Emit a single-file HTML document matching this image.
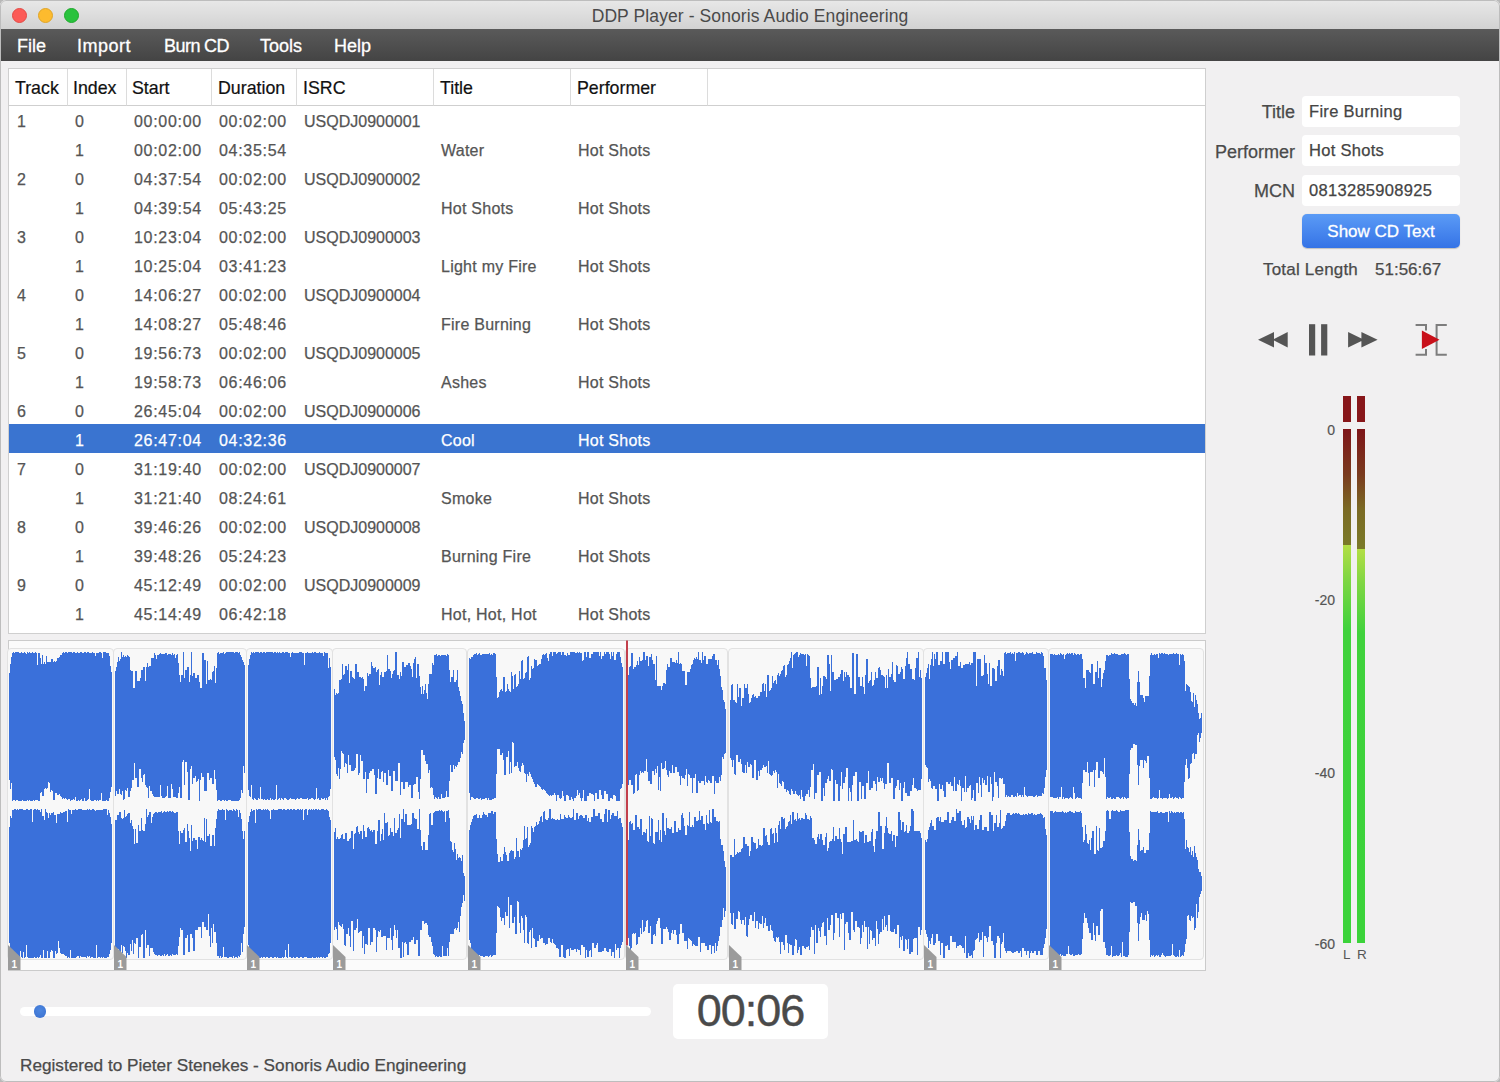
<!DOCTYPE html>
<html><head><meta charset="utf-8">
<style>
*{margin:0;padding:0;box-sizing:border-box}
html,body{width:1500px;height:1082px;overflow:hidden;background:#b8b8b8}
body{font-family:"Liberation Sans",sans-serif;position:relative}
.a{position:absolute}
#win{position:absolute;left:0;top:0;width:1500px;height:1082px;background:#f1f0f1;border-radius:6px;overflow:hidden}
#bd{position:absolute;left:0;top:0;width:1500px;height:1082px;border-radius:6px;border:1px solid #bdbdbd;pointer-events:none}
.ml{font-size:14px;color:#555;width:40px;text-align:right;-webkit-text-stroke:0.2px #555}
#tb{position:absolute;left:0;top:0;width:1500px;height:29px;background:linear-gradient(#e8e8e8,#d2d2d2);}
#tbt{position:absolute;left:0;top:6px;width:1500px;text-align:center;font-size:17.5px;color:#4a4a4a;letter-spacing:0.1px}
.light{position:absolute;top:7.5px;width:15px;height:15px;border-radius:50%}
#mb{position:absolute;left:0;top:29px;width:1500px;height:32px;background:linear-gradient(#5a5a5a,#444)}
.mi{position:absolute;top:36px;font-size:18px;color:#fff;-webkit-text-stroke:0.3px #fff}
#tbl{position:absolute;left:8px;top:68px;width:1198px;height:566px;background:#fff;border:1px solid #cfcfcf}
.hd{position:absolute;top:0;height:37px;border-bottom:1px solid #cfcfcf;border-right:1px solid #dcdcdc}
.ht{position:absolute;top:9px;font-size:17.8px;color:#111;-webkit-text-stroke:0.2px #111}
.row{position:absolute;left:0;width:1196px;height:29px}
.c{position:absolute;top:6px;font-size:16px;color:#555;white-space:nowrap;-webkit-text-stroke:0.25px #555}
.t{letter-spacing:0.7px}
.sel{}
.sel .c{color:#fff;-webkit-text-stroke:0.25px #fff}
.lbl{position:absolute;font-size:18px;color:#4a4a4a;text-align:right;width:200px;-webkit-text-stroke:0.25px #4a4a4a}
.fld{position:absolute;left:1302px;width:158px;height:31px;background:#fff;border-radius:4px}
.fv{position:absolute;left:7px;top:6px;font-size:16.5px;color:#444;letter-spacing:0.3px;white-space:nowrap;-webkit-text-stroke:0.25px #444}
</style></head><body>
<div id="win">
  <div id="tb"><div id="tbt">DDP Player - Sonoris Audio Engineering</div></div>
  <div class="light" style="left:11.5px;background:#fc5b57;border:1px solid #e34a45"></div>
  <div class="light" style="left:38px;background:#fdbb2e;border:1px solid #e0a527"></div>
  <div class="light" style="left:64px;background:#29c23d;border:1px solid #1eaa2c"></div>
  <div id="mb"></div>
  <div class="mi" style="left:17px">File</div>
  <div class="mi" style="left:77px;letter-spacing:0.5px">Import</div>
  <div class="mi" style="left:164px;letter-spacing:-0.5px;word-spacing:-0.5px">Burn CD</div>
  <div class="mi" style="left:260px">Tools</div>
  <div class="mi" style="left:334px">Help</div>

  <div id="tbl">
    <div class="hd" style="left:0px;width:59px;"></div>
<div class="hd" style="left:59px;width:59px;"></div>
<div class="hd" style="left:118px;width:85px;"></div>
<div class="hd" style="left:203px;width:85px;"></div>
<div class="hd" style="left:288px;width:137px;"></div>
<div class="hd" style="left:425px;width:137px;"></div>
<div class="hd" style="left:562px;width:137px;"></div>
<div class="hd" style="left:699px;width:498px;border-right:none"></div>
<div class="ht" style="left:6px">Track</div>
<div class="ht" style="left:64px">Index</div>
<div class="ht" style="left:123px">Start</div>
<div class="ht" style="left:209px">Duration</div>
<div class="ht" style="left:294px">ISRC</div>
<div class="ht" style="left:431px">Title</div>
<div class="ht" style="left:568px">Performer</div>
    <div class="a" style="left:0;top:355px;width:1196px;height:29px;background:#3a74d0"></div>
<div class="row" style="top:38px"><div class="c" style="left:8px">1</div><div class="c" style="left:66px">0</div><div class="c t" style="left:125px">00:00:00</div><div class="c t" style="left:210px">00:02:00</div><div class="c" style="left:295px">USQDJ0900001</div></div>
<div class="row" style="top:67px"><div class="c" style="left:66px">1</div><div class="c t" style="left:125px">00:02:00</div><div class="c t" style="left:210px">04:35:54</div><div class="c" style="left:432px;letter-spacing:0.25px">Water</div><div class="c" style="left:569px;letter-spacing:0.25px">Hot Shots</div></div>
<div class="row" style="top:96px"><div class="c" style="left:8px">2</div><div class="c" style="left:66px">0</div><div class="c t" style="left:125px">04:37:54</div><div class="c t" style="left:210px">00:02:00</div><div class="c" style="left:295px">USQDJ0900002</div></div>
<div class="row" style="top:125px"><div class="c" style="left:66px">1</div><div class="c t" style="left:125px">04:39:54</div><div class="c t" style="left:210px">05:43:25</div><div class="c" style="left:432px;letter-spacing:0.25px">Hot Shots</div><div class="c" style="left:569px;letter-spacing:0.25px">Hot Shots</div></div>
<div class="row" style="top:154px"><div class="c" style="left:8px">3</div><div class="c" style="left:66px">0</div><div class="c t" style="left:125px">10:23:04</div><div class="c t" style="left:210px">00:02:00</div><div class="c" style="left:295px">USQDJ0900003</div></div>
<div class="row" style="top:183px"><div class="c" style="left:66px">1</div><div class="c t" style="left:125px">10:25:04</div><div class="c t" style="left:210px">03:41:23</div><div class="c" style="left:432px;letter-spacing:0.25px">Light my Fire</div><div class="c" style="left:569px;letter-spacing:0.25px">Hot Shots</div></div>
<div class="row" style="top:212px"><div class="c" style="left:8px">4</div><div class="c" style="left:66px">0</div><div class="c t" style="left:125px">14:06:27</div><div class="c t" style="left:210px">00:02:00</div><div class="c" style="left:295px">USQDJ0900004</div></div>
<div class="row" style="top:241px"><div class="c" style="left:66px">1</div><div class="c t" style="left:125px">14:08:27</div><div class="c t" style="left:210px">05:48:46</div><div class="c" style="left:432px;letter-spacing:0.25px">Fire Burning</div><div class="c" style="left:569px;letter-spacing:0.25px">Hot Shots</div></div>
<div class="row" style="top:270px"><div class="c" style="left:8px">5</div><div class="c" style="left:66px">0</div><div class="c t" style="left:125px">19:56:73</div><div class="c t" style="left:210px">00:02:00</div><div class="c" style="left:295px">USQDJ0900005</div></div>
<div class="row" style="top:299px"><div class="c" style="left:66px">1</div><div class="c t" style="left:125px">19:58:73</div><div class="c t" style="left:210px">06:46:06</div><div class="c" style="left:432px;letter-spacing:0.25px">Ashes</div><div class="c" style="left:569px;letter-spacing:0.25px">Hot Shots</div></div>
<div class="row" style="top:328px"><div class="c" style="left:8px">6</div><div class="c" style="left:66px">0</div><div class="c t" style="left:125px">26:45:04</div><div class="c t" style="left:210px">00:02:00</div><div class="c" style="left:295px">USQDJ0900006</div></div>
<div class="row sel" style="top:357px"><div class="c" style="left:66px">1</div><div class="c t" style="left:125px">26:47:04</div><div class="c t" style="left:210px">04:32:36</div><div class="c" style="left:432px;letter-spacing:0.25px">Cool</div><div class="c" style="left:569px;letter-spacing:0.25px">Hot Shots</div></div>
<div class="row" style="top:386px"><div class="c" style="left:8px">7</div><div class="c" style="left:66px">0</div><div class="c t" style="left:125px">31:19:40</div><div class="c t" style="left:210px">00:02:00</div><div class="c" style="left:295px">USQDJ0900007</div></div>
<div class="row" style="top:415px"><div class="c" style="left:66px">1</div><div class="c t" style="left:125px">31:21:40</div><div class="c t" style="left:210px">08:24:61</div><div class="c" style="left:432px;letter-spacing:0.25px">Smoke</div><div class="c" style="left:569px;letter-spacing:0.25px">Hot Shots</div></div>
<div class="row" style="top:444px"><div class="c" style="left:8px">8</div><div class="c" style="left:66px">0</div><div class="c t" style="left:125px">39:46:26</div><div class="c t" style="left:210px">00:02:00</div><div class="c" style="left:295px">USQDJ0900008</div></div>
<div class="row" style="top:473px"><div class="c" style="left:66px">1</div><div class="c t" style="left:125px">39:48:26</div><div class="c t" style="left:210px">05:24:23</div><div class="c" style="left:432px;letter-spacing:0.25px">Burning Fire</div><div class="c" style="left:569px;letter-spacing:0.25px">Hot Shots</div></div>
<div class="row" style="top:502px"><div class="c" style="left:8px">9</div><div class="c" style="left:66px">0</div><div class="c t" style="left:125px">45:12:49</div><div class="c t" style="left:210px">00:02:00</div><div class="c" style="left:295px">USQDJ0900009</div></div>
<div class="row" style="top:531px"><div class="c" style="left:66px">1</div><div class="c t" style="left:125px">45:14:49</div><div class="c t" style="left:210px">06:42:18</div><div class="c" style="left:432px;letter-spacing:0.25px">Hot, Hot, Hot</div><div class="c" style="left:569px;letter-spacing:0.25px">Hot Shots</div></div>
  </div>

  <div class="lbl" style="left:1095px;top:101.5px">Title</div>
<div class="lbl" style="left:1095px;top:141.5px">Performer</div>
<div class="lbl" style="left:1095px;top:180.5px">MCN</div>
<div class="fld" style="top:96px"><div class="fv">Fire Burning</div></div>
<div class="fld" style="top:135px"><div class="fv">Hot Shots</div></div>
<div class="fld" style="top:175px"><div class="fv">0813285908925</div></div>
<div class="a" style="left:1302px;top:214px;width:158px;height:34px;border-radius:5px;background:linear-gradient(#5b9bf6,#3573e6);box-shadow:0 0.5px 1px rgba(0,0,0,0.2)"></div>
<div class="a" style="left:1302px;top:221.5px;width:158px;text-align:center;font-size:17px;color:#fff;-webkit-text-stroke:0.3px #fff">Show CD Text</div>
<div class="a" style="left:1263px;top:260px;font-size:17px;letter-spacing:0.2px;color:#4a4a4a;-webkit-text-stroke:0.25px #4a4a4a">Total Length</div>
<div class="a" style="left:1375px;top:260px;font-size:17px;color:#4a4a4a;-webkit-text-stroke:0.25px #4a4a4a">51:56:67</div>
<svg class="a" style="left:1240px;top:310px" width="220" height="60" viewBox="1240 310 220 60">
  <path d="M1258 339.7 L1274 332 L1274 347.4 Z M1272.6 339.7 L1287.7 332 L1287.7 347.4 Z" fill="#555"/>
  <rect x="1309" y="324.2" width="6.2" height="31.3" fill="#555"/>
  <rect x="1321.1" y="324.2" width="6.2" height="31.3" fill="#555"/>
  <path d="M1348.1 332 L1364 339.7 L1348.1 347.4 Z M1361.4 332 L1377.6 339.7 L1361.4 347.4 Z" fill="#555"/>
  <path d="M1415.6 325 H1426 V330.5 M1426 349 V354.7 H1415.6" fill="none" stroke="#7d7d7d" stroke-width="2"/>
  <path d="M1446.8 325 H1436.6 V354.7 H1446.8" fill="none" stroke="#7d7d7d" stroke-width="2"/>
  <path d="M1421.9 330.5 L1439.5 339.7 L1421.9 348.9 Z" fill="#c8101a"/>
</svg>
<div class="a" style="left:1343px;top:396px;width:8px;height:26px;background:#87161a"></div>
<div class="a" style="left:1357px;top:396px;width:8px;height:26px;background:#87161a"></div>
<div class="a" style="left:1343px;top:429px;width:8px;height:514px;background:linear-gradient(#7e1519 0px,#7a3a1e 45px,#7b6a24 80px,#7a7a28 116px,#b3de45 116px,#7fd643 150px,#40d23c 200px,#3bd33a 514px)"></div>
<div class="a" style="left:1357px;top:429px;width:8px;height:514px;background:linear-gradient(#7e1519 0px,#7a3a1e 45px,#7b6a24 80px,#7a7a28 120px,#b3de45 120px,#7fd643 154px,#40d23c 204px,#3bd33a 514px)"></div>
<div class="a ml" style="left:1295px;top:422px">0</div>
<div class="a ml" style="left:1295px;top:592px">-20</div>
<div class="a ml" style="left:1295px;top:765px">-40</div>
<div class="a ml" style="left:1295px;top:936px">-60</div>
<div class="a" style="left:1343px;top:947px;font-size:13.5px;color:#555">L</div>
<div class="a" style="left:1357px;top:947px;font-size:13.5px;color:#555">R</div>

  <div class="a" style="left:8px;top:640px;width:1198px;height:331px;background:#fbfbfb;border:1px solid #cbcbcb"></div>
<div class="a" style="left:7px;top:648px;width:107px;height:312px;border:1px solid #e2e2e2;border-radius:4px;background:#f8f8f8"></div>
<div class="a" style="left:113px;top:648px;width:134px;height:312px;border:1px solid #e2e2e2;border-radius:4px;background:#f8f8f8"></div>
<div class="a" style="left:246px;top:648px;width:87px;height:312px;border:1px solid #e2e2e2;border-radius:4px;background:#f8f8f8"></div>
<div class="a" style="left:332px;top:648px;width:135px;height:312px;border:1px solid #e2e2e2;border-radius:4px;background:#f8f8f8"></div>
<div class="a" style="left:467px;top:648px;width:158px;height:312px;border:1px solid #e2e2e2;border-radius:4px;background:#f8f8f8"></div>
<div class="a" style="left:625px;top:648px;width:103px;height:312px;border:1px solid #e2e2e2;border-radius:4px;background:#f8f8f8"></div>
<div class="a" style="left:728px;top:648px;width:196px;height:312px;border:1px solid #e2e2e2;border-radius:4px;background:#f8f8f8"></div>
<div class="a" style="left:923px;top:648px;width:126px;height:312px;border:1px solid #e2e2e2;border-radius:4px;background:#f8f8f8"></div>
<div class="a" style="left:1048px;top:648px;width:156px;height:312px;border:1px solid #e2e2e2;border-radius:4px;background:#f8f8f8"></div>
<svg class="a" style="left:0;top:0" width="1500" height="1082" viewBox="0 0 1500 1082"><path fill="#3a70da" shape-rendering="crispEdges" d="M9 673.3H9V673.3H10V663.8H11V656.7H12V652.7H13V652.4H14V652.6H15V652.0H16V652.1H17V652.0H18V652.0H19V653.2H20V653.2H21V652.0H22V652.9H23V653.1H24V652.0H25V653.2H26V653.5H27V652.0H28V653.2H29V652.0H30V653.0H31V652.9H32V652.2H33V652.5H34V653.1H35V652.3H36V653.1H37V665.4H38V653.2H39V653.3H40V657.5H41V664.0H42V654.9H43V663.6H44V661.7H45V664.0H46V656.2H47V662.0H48V661.8H49V661.9H50V661.7H51V659.2H52V659.0H53V661.6H54V661.3H55V662.0H56V661.2H57V658.1H58V658.1H59V656.8H60V654.7H61V654.9H62V653.3H63V652.0H64V653.0H65V652.0H66V652.3H67V652.8H68V652.0H69V652.0H70V652.4H71V652.1H72V652.9H73V652.0H74V652.0H75V652.9H76V652.9H77V652.0H78V652.5H79V652.8H80V652.0H81V652.4H82V653.4H83V652.5H84V652.0H85V652.1H86V653.3H87V652.0H88V652.0H89V653.4H90V653.4H91V652.6H92V652.4H93V653.0H94V652.5H95V655.6H96V653.2H97V652.9H98V652.8H99V652.0H100V652.1H101V653.4H102V658.0H103V652.1H104V652.0H105V652.0H106V653.0H107V652.8H108V653.4H109V656.3H110V665.8H111V671.8H112V786.5H112V786.5H111V792.4H110V797.9H109V800.8H108V800.7H107V799.6H106V801.0H105V800.6H104V801.0H103V800.6H102V792.8H101V799.5H100V800.3H99V801.0H98V799.8H97V800.9H96V799.9H95V799.6H94V800.5H93V800.9H92V801.0H91V800.3H90V789.0H89V799.3H88V799.6H87V800.5H86V801.0H85V798.2H84V800.9H83V800.6H82V799.4H81V799.8H80V800.8H79V800.2H78V800.6H77V801.0H76V797.0H75V800.1H74V799.3H73V800.3H72V799.9H71V800.6H70V799.1H69V799.3H68V800.1H67V799.0H66V798.1H65V798.6H64V798.1H63V798.5H62V796.5H61V796.4H60V794.0H59V795.0H58V794.6H57V793.4H56V792.8H55V799.7H54V799.5H53V790.5H52V790.0H51V792.0H50V782.8H49V782.1H48V788.2H47V788.5H46V788.4H45V788.6H44V796.1H43V796.4H42V792.4H41V792.7H40V800.6H39V801.0H38V800.2H37V799.8H36V799.6H35V800.5H34V799.9H33V801.0H32V800.6H31V800.5H30V799.5H29V801.0H28V800.4H27V800.5H26V801.0H25V800.8H24V800.7H23V800.3H22V800.5H21V800.7H20V800.6H19V801.0H18V800.2H17V800.3H16V801.0H15V800.0H14V800.3H13V800.8H12V783.2H11V789.1H10V780.4H9Z M9 827.0H9V827.0H10V816.2H11V818.4H12V810.4H13V809.7H14V809.0H15V809.0H16V809.8H17V809.1H18V810.3H19V809.0H20V809.0H21V809.0H22V809.0H23V809.9H24V809.6H25V809.6H26V809.3H27V809.0H28V810.1H29V810.4H30V809.0H31V809.0H32V822.1H33V809.7H34V809.0H35V809.0H36V809.5H37V809.0H38V810.4H39V809.5H40V812.1H41V809.0H42V816.1H43V816.3H44V819.9H45V809.0H46V812.2H47V812.6H48V818.1H49V812.9H50V815.3H51V812.7H52V812.6H53V812.2H54V814.8H55V814.7H56V823.0H57V814.2H58V813.8H59V813.5H60V812.2H61V812.9H62V813.0H63V812.2H64V812.2H65V811.3H66V811.4H67V821.6H68V809.2H69V810.4H70V809.8H71V813.7H72V809.9H73V809.5H74V810.3H75V809.0H76V810.4H77V810.4H78V809.3H79V809.4H80V809.1H81V809.2H82V809.8H83V810.3H84V810.2H85V810.0H86V810.3H87V809.0H88V809.6H89V809.0H90V810.2H91V810.0H92V809.3H93V809.2H94V809.5H95V810.5H96V810.0H97V810.2H98V810.4H99V810.4H100V809.6H101V810.3H102V809.9H103V809.2H104V809.4H105V809.1H106V809.1H107V815.2H108V810.1H109V813.1H110V817.1H111V824.1H112V942.5H112V942.5H111V950.4H110V953.9H109V957.3H108V957.0H107V957.8H106V957.6H105V958.0H104V957.0H103V958.0H102V957.3H101V958.0H100V956.9H99V956.8H98V958.0H97V944.9H96V958.0H95V957.7H94V957.8H93V956.7H92V956.7H91V957.7H90V956.3H89V956.6H88V956.4H87V957.9H86V956.6H85V956.8H84V957.3H83V956.6H82V956.7H81V956.2H80V957.8H79V956.4H78V956.4H77V957.2H76V957.9H75V957.9H74V957.5H73V958.0H72V957.9H71V949.8H70V957.5H69V956.7H68V957.5H67V955.5H66V956.4H65V954.7H64V954.4H63V954.3H62V954.3H61V953.1H60V948.0H59V940.8H58V953.2H57V953.6H56V951.2H55V958.0H54V958.0H53V950.6H52V950.4H51V951.9H50V958.0H49V958.0H48V951.2H47V958.0H46V958.0H45V958.0H44V949.5H43V958.0H42V958.0H41V955.4H40V956.9H39V958.0H38V957.0H37V957.5H36V958.0H35V957.3H34V957.9H33V958.0H32V957.5H31V958.0H30V957.5H29V958.0H28V957.2H27V945.3H26V956.6H25V958.0H24V952.2H23V958.0H22V956.8H21V951.1H20V957.2H19V958.0H18V958.0H17V957.7H16V956.7H15V958.0H14V956.9H13V957.6H12V953.4H11V949.1H10V943.0H9Z M115 670.9H115V670.9H116V666.8H117V662.3H118V657.2H119V661.1H120V658.9H121V652.0H122V656.7H123V655.1H124V656.5H125V655.5H126V656.6H127V655.1H128V656.3H129V656.6H130V670.3H131V670.6H132V670.6H133V687.5H134V687.5H135V671.0H136V671.0H137V681.0H138V681.2H139V681.2H140V677.6H141V669.8H142V669.8H143V667.2H144V667.2H145V680.7H146V667.2H147V663.3H148V666.8H149V666.1H150V666.1H151V657.8H152V657.8H153V658.2H154V653.1H155V654.9H156V658.5H157V654.6H158V654.9H159V653.5H160V653.0H161V653.9H162V654.0H163V653.5H164V653.6H165V653.4H166V653.2H167V654.6H168V654.1H169V654.2H170V654.2H171V654.7H172V653.3H173V654.6H174V654.0H175V657.8H176V654.7H177V654.2H178V663.3H179V675.0H180V681.7H181V675.2H182V675.2H183V652.0H184V677.7H185V669.8H186V669.8H187V667.2H188V667.2H189V681.5H190V675.1H191V652.3H192V676.4H193V673.2H194V673.2H195V678.0H196V677.5H197V674.5H198V674.5H199V682.3H200V688.2H201V688.2H202V653.0H203V653.0H204V660.1H205V660.1H206V684.2H207V661.4H208V679.7H209V679.7H210V678.9H211V679.7H212V671.9H213V670.6H214V666.3H215V682.6H216V667.8H217V652.9H218V652.3H219V653.5H220V653.2H221V653.3H222V652.7H223V652.1H224V653.5H225V653.1H226V652.2H227V652.4H228V652.0H229V652.1H230V652.0H231V652.0H232V652.0H233V652.0H234V653.1H235V652.0H236V652.0H237V652.1H238V652.6H239V652.1H240V655.2H241V656.5H242V660.2H243V661.6H244V664.7H245V773.1H245V773.1H244V765.6H243V792.8H242V789.5H241V798.0H240V799.7H239V800.5H238V801.0H237V801.0H236V801.0H235V800.8H234V801.0H233V800.8H232V800.9H231V799.7H230V799.6H229V799.8H228V801.0H227V801.0H226V799.9H225V800.7H224V800.3H223V799.5H222V801.0H221V801.0H220V800.4H219V800.4H218V800.8H217V789.8H216V779.0H215V769.8H214V783.6H213V783.6H212V778.3H211V778.3H210V779.6H209V773.0H208V773.0H207V791.2H206V791.2H205V790.5H204V776.7H203V776.7H202V773.0H201V779.8H200V801.0H199V779.1H198V780.9H197V782.4H196V776.3H195V778.4H194V778.4H193V783.8H192V765.8H191V768.8H190V799.7H189V799.7H188V772.1H187V762.4H186V762.4H185V784.6H184V760.4H183V761.9H182V798.4H181V798.4H180V786.7H179V792.5H178V797.7H177V797.9H176V796.6H175V796.9H174V797.4H173V788.6H172V784.1H171V797.9H170V797.5H169V797.6H168V785.7H167V796.2H166V797.4H165V797.8H164V797.7H163V797.7H162V796.1H161V784.5H160V797.0H159V797.4H158V796.7H157V797.3H156V797.2H155V797.2H154V795.7H153V794.0H152V791.4H151V790.6H150V785.6H149V798.4H148V787.7H147V786.9H146V785.3H145V774.2H144V775.3H143V781.9H142V777.7H141V768.8H140V768.8H139V787.4H138V787.4H137V778.0H136V778.0H135V763.3H134V779.9H133V779.9H132V788.1H131V791.1H130V796.9H129V797.2H128V787.7H127V791.3H126V790.4H125V799.3H124V799.5H123V790.5H122V794.8H121V794.1H120V789.2H119V793.8H118V793.5H117V791.2H116V795.6H115Z M115 819.9H115V819.9H116V819.6H117V815.0H118V815.0H119V811.8H120V812.1H121V818.0H122V818.5H123V817.8H124V810.2H125V816.5H126V815.9H127V813.7H128V813.3H129V813.1H130V822.6H131V820.0H132V826.4H133V828.6H134V844.0H135V828.9H136V842.7H137V842.7H138V824.7H139V830.7H140V830.7H141V818.4H142V829.6H143V830.5H144V830.5H145V824.0H146V809.0H147V817.1H148V814.7H149V811.6H150V811.6H151V823.0H152V817.2H153V814.3H154V812.6H155V811.6H156V812.3H157V812.8H158V811.5H159V812.1H160V811.8H161V811.1H162V812.8H163V811.7H164V811.1H165V811.9H166V812.4H167V811.0H168V812.4H169V811.4H170V811.0H171V812.3H172V811.1H173V812.3H174V812.5H175V813.0H176V811.9H177V811.7H178V830.9H179V844.4H180V830.8H181V833.1H182V833.1H183V829.8H184V828.1H185V841.9H186V841.9H187V823.7H188V831.1H189V838.3H190V850.8H191V825.1H192V840.5H193V837.7H194V837.7H195V839.7H196V839.7H197V849.4H198V836.7H199V836.7H200V840.3H201V837.7H202V840.1H203V840.6H204V817.7H205V842.2H206V818.8H207V835.8H208V835.8H209V833.5H210V846.3H211V846.3H212V834.8H213V834.8H214V846.2H215V827.8H216V818.6H217V810.5H218V809.1H219V809.5H220V810.0H221V810.0H222V809.4H223V810.3H224V809.6H225V820.3H226V809.4H227V809.6H228V810.7H229V809.8H230V810.1H231V810.0H232V810.6H233V809.1H234V809.7H235V810.6H236V809.0H237V809.5H238V817.1H239V810.2H240V812.7H241V818.5H242V830.6H243V838.5H244V831.1H245V927.4H245V927.4H244V933.9H243V951.5H242V942.9H241V955.0H240V957.3H239V956.4H238V957.5H237V957.3H236V957.1H235V957.5H234V956.2H233V957.5H232V956.6H231V957.4H230V957.2H229V958.0H228V957.9H227V957.2H226V957.2H225V956.6H224V947.0H223V956.5H222V957.8H221V956.2H220V957.9H219V956.2H218V956.2H217V942.5H216V932.0H215V932.0H214V924.4H213V943.0H212V928.3H211V946.5H210V936.1H209V914.2H208V930.0H207V930.0H206V926.7H205V926.7H204V921.7H203V921.7H202V937.8H201V926.6H200V927.3H199V927.3H198V929.5H197V929.9H196V929.9H195V950.7H194V950.7H193V938.3H192V933.5H191V933.5H190V952.4H189V952.4H188V935.3H187V937.7H186V937.7H185V955.2H184V955.2H183V930.3H182V930.3H181V927.8H180V937.2H179V946.4H178V954.9H177V954.3H176V955.3H175V954.6H174V954.5H173V954.1H172V955.9H171V955.2H170V955.8H169V955.6H168V954.4H167V954.9H166V955.5H165V954.1H164V955.7H163V954.6H162V955.7H161V955.8H160V955.1H159V955.0H158V955.8H157V955.1H156V955.0H155V954.1H154V951.7H153V948.3H152V948.4H151V948.4H150V956.2H149V944.5H148V944.5H147V947.5H146V930.0H145V957.7H144V957.7H143V934.1H142V934.6H141V946.9H140V946.9H139V957.5H138V937.5H137V937.5H136V944.4H135V943.1H134V953.9H133V939.7H132V951.2H131V944.0H130V955.0H129V954.8H128V952.5H127V958.0H126V951.4H125V946.8H124V946.2H123V953.3H122V944.6H121V951.9H120V952.5H119V948.9H118V948.8H117V958.0H116V950.9H115Z M248 664.6H248V664.6H249V659.2H250V654.9H251V652.0H252V652.6H253V652.0H254V653.1H255V652.0H256V652.4H257V652.0H258V652.1H259V653.1H260V652.0H261V652.0H262V652.8H263V652.0H264V652.1H265V652.6H266V652.0H267V652.0H268V652.0H269V652.0H270V652.2H271V652.0H272V652.0H273V652.6H274V652.1H275V652.0H276V653.1H277V652.0H278V653.1H279V652.0H280V652.8H281V653.0H282V652.1H283V652.0H284V652.9H285V652.0H286V652.0H287V652.1H288V653.1H289V653.3H290V656.7H291V652.6H292V652.0H293V652.9H294V652.6H295V653.4H296V652.8H297V652.9H298V653.2H299V652.1H300V652.0H301V652.3H302V652.8H303V652.8H304V665.0H305V652.6H306V652.8H307V652.2H308V652.8H309V652.8H310V652.8H311V653.1H312V652.0H313V653.4H314V652.0H315V652.0H316V653.2H317V652.7H318V653.4H319V652.4H320V652.9H321V653.0H322V653.2H323V656.2H324V652.0H325V652.5H326V653.3H327V653.2H328V667.5H329V658.4H330V666.9H331V789.2H331V789.2H330V795.9H329V796.8H328V800.0H327V798.1H326V799.7H325V798.4H324V799.3H323V798.7H322V798.2H321V799.5H320V799.6H319V798.0H318V799.0H317V787.6H316V798.7H315V799.9H314V799.3H313V798.4H312V798.2H311V799.0H310V799.2H309V799.7H308V798.4H307V798.5H306V798.6H305V798.9H304V799.4H303V799.4H302V798.1H301V798.1H300V799.4H299V799.3H298V798.1H297V798.5H296V799.7H295V798.5H294V799.0H293V799.1H292V799.0H291V798.1H290V799.0H289V799.5H288V799.5H287V799.2H286V798.3H285V798.4H284V799.5H283V798.9H282V798.4H281V799.7H280V798.3H279V799.0H278V799.7H277V784.9H276V798.8H275V799.8H274V799.5H273V799.0H272V799.7H271V798.3H270V799.7H269V799.8H268V799.1H267V799.9H266V799.7H265V798.5H264V799.8H263V798.9H262V799.4H261V786.6H260V799.2H259V798.3H258V799.6H257V799.9H256V799.4H255V798.2H254V799.9H253V799.2H252V785.1H251V796.5H250V796.2H249V790.4H248Z M248 821.6H248V821.6H249V815.9H250V812.2H251V809.3H252V810.5H253V810.4H254V810.4H255V822.5H256V809.0H257V810.1H258V809.0H259V809.1H260V809.0H261V810.1H262V810.2H263V809.1H264V810.0H265V809.0H266V809.6H267V809.0H268V809.9H269V810.5H270V819.3H271V809.9H272V809.9H273V809.4H274V810.2H275V809.8H276V809.6H277V810.1H278V809.0H279V809.0H280V809.4H281V809.0H282V810.4H283V809.0H284V809.0H285V810.0H286V810.0H287V809.0H288V809.0H289V810.2H290V809.3H291V809.0H292V809.5H293V809.3H294V809.3H295V810.4H296V809.5H297V809.0H298V809.0H299V809.9H300V809.4H301V809.8H302V809.0H303V819.6H304V809.8H305V809.0H306V809.0H307V814.7H308V810.4H309V809.0H310V810.0H311V809.3H312V810.1H313V809.0H314V809.9H315V809.0H316V809.1H317V810.3H318V809.0H319V809.5H320V809.7H321V809.4H322V809.3H323V809.0H324V810.0H325V810.3H326V809.0H327V810.2H328V810.9H329V817.4H330V819.5H331V943.2H331V943.2H330V953.2H329V954.4H328V956.5H327V957.0H326V958.0H325V958.0H324V957.0H323V957.6H322V956.7H321V956.6H320V958.0H319V957.4H318V958.0H317V956.9H316V958.0H315V957.9H314V958.0H313V957.1H312V958.0H311V958.0H310V957.5H309V958.0H308V958.0H307V957.3H306V957.0H305V957.0H304V957.6H303V957.7H302V957.0H301V956.9H300V958.0H299V957.5H298V956.6H297V956.9H296V957.9H295V958.0H294V957.3H293V958.0H292V958.0H291V956.6H290V957.3H289V943.8H288V958.0H287V956.9H286V949.8H285V957.2H284V958.0H283V957.4H282V957.6H281V957.6H280V957.6H279V957.7H278V957.1H277V957.7H276V956.7H275V956.8H274V957.7H273V957.5H272V957.2H271V957.0H270V958.0H269V957.7H268V957.4H267V956.7H266V958.0H265V957.2H264V957.1H263V958.0H262V956.7H261V958.0H260V958.0H259V957.4H258V958.0H257V957.3H256V956.9H255V957.0H254V958.0H253V953.9H252V956.5H251V954.7H250V950.1H249V945.2H248Z M334 689.3H334V689.3H335V695.2H336V692.5H337V694.3H338V692.8H339V679.8H340V680.0H341V678.5H342V663.5H343V675.1H344V673.6H345V666.1H346V666.0H347V669.7H348V664.0H349V682.6H350V670.6H351V670.8H352V677.0H353V678.2H354V678.6H355V663.5H356V663.6H357V671.9H358V672.2H359V676.6H360V676.8H361V677.5H362V677.4H363V678.9H364V690.6H365V686.4H366V686.4H367V672.7H368V676.2H369V673.7H370V673.7H371V662.2H372V666.0H373V668.2H374V668.1H375V667.2H376V672.1H377V669.7H378V669.3H379V684.7H380V675.4H381V672.0H382V677.2H383V677.2H384V672.0H385V671.9H386V671.1H387V654.7H388V668.8H389V668.7H390V670.8H391V677.6H392V673.7H393V671.0H394V670.3H395V652.0H396V652.0H397V674.9H398V674.9H399V679.1H400V671.5H401V676.0H402V662.2H403V662.2H404V666.9H405V666.9H406V665.1H407V665.1H408V663.4H409V663.4H410V665.5H411V669.1H412V676.9H413V663.4H414V659.4H415V656.8H416V677.6H417V664.2H418V664.2H419V675.5H420V686.7H421V694.1H422V686.3H423V694.2H424V690.1H425V683.9H426V693.1H427V699.2H428V683.7H429V673.9H430V673.5H431V673.5H432V663.4H433V664.9H434V654.7H435V654.7H436V654.4H437V655.7H438V654.5H439V655.1H440V655.5H441V654.8H442V654.7H443V654.7H444V655.1H445V655.4H446V655.9H447V654.4H448V655.0H449V669.8H450V682.1H451V676.6H452V677.0H453V670.3H454V682.1H455V681.8H456V680.1H457V669.5H458V686.8H459V691.4H460V696.2H461V700.8H462V704.4H463V712.5H464V720.9H465V740.2H465V740.2H464V742.7H463V753.5H462V751.8H461V757.9H460V761.9H459V761.6H458V764.7H457V766.8H456V765.8H455V769.4H454V765.2H453V771.8H452V772.1H451V765.2H450V781.3H449V797.1H448V797.3H447V790.9H446V797.0H445V798.0H444V798.4H443V797.7H442V793.9H441V798.7H440V798.7H439V797.4H438V798.8H437V797.8H436V797.1H435V798.6H434V794.8H433V787.7H432V786.8H431V787.5H430V770.2H429V773.2H428V763.9H427V763.9H426V761.1H425V754.6H424V754.6H423V749.7H422V749.7H421V779.2H420V798.9H419V792.1H418V777.1H417V777.1H416V783.6H415V783.6H414V784.5H413V798.0H412V798.0H411V784.6H410V784.6H409V787.2H408V782.2H407V782.2H406V782.2H405V788.7H404V788.7H403V781.7H402V781.7H401V795.2H400V763.4H399V763.3H398V781.1H397V781.0H396V780.9H395V770.6H394V770.6H393V790.9H392V790.8H391V775.5H390V775.5H389V770.4H388V784.8H387V784.7H386V773.0H385V772.9H384V782.2H383V770.5H382V772.3H381V778.8H380V778.7H379V768.7H378V778.0H377V793.8H376V793.8H375V774.6H374V768.7H373V768.6H372V771.2H371V771.1H370V772.5H369V778.5H368V778.5H367V792.8H366V771.8H365V779.1H364V779.0H363V760.6H362V760.5H361V755.0H360V772.8H359V774.6H358V754.4H357V754.2H356V768.1H355V770.2H354V770.7H353V771.0H352V770.5H351V765.0H350V764.6H349V754.7H348V773.0H347V763.7H346V763.2H345V767.2H344V754.2H343V753.3H342V750.5H341V769.3H340V779.2H339V768.1H338V775.8H337V773.8H336V759.5H335V757.2H334Z M334 831.7H334V831.7H335V827.8H336V839.1H337V837.4H338V839.2H339V838.7H340V838.3H341V834.5H342V834.0H343V839.4H344V838.9H345V833.3H346V833.0H347V841.4H348V841.3H349V838.5H350V838.3H351V831.3H352V831.0H353V848.8H354V833.5H355V833.2H356V826.6H357V826.3H358V832.4H359V834.1H360V831.3H361V831.2H362V838.9H363V824.5H364V831.3H365V837.0H366V836.9H367V828.2H368V826.8H369V828.6H370V830.5H371V830.4H372V832.1H373V830.4H374V830.3H375V844.0H376V844.0H377V831.2H378V819.9H379V819.8H380V841.3H381V834.1H382V828.9H383V839.6H384V812.5H385V822.7H386V822.6H387V821.9H388V835.5H389V835.4H390V828.3H391V831.7H392V831.7H393V835.8H394V817.6H395V833.2H396V833.1H397V830.0H398V827.9H399V813.8H400V837.8H401V818.6H402V818.6H403V809.0H404V821.9H405V814.4H406V814.4H407V824.8H408V824.8H409V824.5H410V824.5H411V823.6H412V813.3H413V813.3H414V817.6H415V819.3H416V819.3H417V828.5H418V828.5H419V809.0H420V830.4H421V845.5H422V850.2H423V842.0H424V842.0H425V850.3H426V850.3H427V850.2H428V834.6H429V813.8H430V812.8H431V824.5H432V824.5H433V813.3H434V811.6H435V811.0H436V811.0H437V811.1H438V811.3H439V810.2H440V811.0H441V810.0H442V810.8H443V811.5H444V811.1H445V821.5H446V810.6H447V810.6H448V810.2H449V818.3H450V840.9H451V842.0H452V850.4H453V851.6H454V843.0H455V849.4H456V859.6H457V853.8H458V858.2H459V856.6H460V857.9H461V861.4H462V855.2H463V872.7H464V875.6H465V901.1H465V901.1H464V894.9H463V902.7H462V907.2H461V915.7H460V932.4H459V921.5H458V928.3H457V930.1H456V927.7H455V929.0H454V933.7H453V934.1H452V934.0H451V933.6H450V941.9H449V955.9H448V948.4H447V956.1H446V956.3H445V956.2H444V956.1H443V945.5H442V956.8H441V956.5H440V955.9H439V956.5H438V956.9H437V955.8H436V956.8H435V955.4H434V954.2H433V946.0H432V942.2H431V937.2H430V937.2H429V934.6H428V924.5H427V923.0H426V923.0H425V924.4H424V920.7H423V920.7H422V929.5H421V930.2H420V955.6H419V955.6H418V939.6H417V939.6H416V944.3H415V944.3H414V937.4H413V939.9H412V940.2H411V942.1H410V942.1H409V954.6H408V954.6H407V943.5H406V941.6H405V942.6H404V957.4H403V941.8H402V958.0H401V958.0H400V948.0H399V947.9H398V930.3H397V937.8H396V930.2H395V925.3H394V935.6H393V950.1H392V940.3H391V928.2H390V938.1H389V938.4H388V938.3H387V950.4H386V936.4H385V935.8H384V935.8H383V936.8H382V936.7H381V930.3H380V932.4H379V931.3H378V937.2H377V951.5H376V929.9H375V928.4H374V928.3H373V941.8H372V941.7H371V944.5H370V928.2H369V928.1H368V945.1H367V944.3H366V944.2H365V953.5H364V935.8H363V947.9H362V931.1H361V931.1H360V931.8H359V932.5H358V919.2H357V927.6H356V930.1H355V930.0H354V951.4H353V921.2H352V921.1H351V946.7H350V935.6H349V928.4H348V934.4H347V934.1H346V945.8H345V945.4H344V929.4H343V923.8H342V926.5H341V926.0H340V925.4H339V921.7H338V939.8H337V928.8H336V926.6H335V929.6H334Z M469 657.9H469V657.9H470V658.8H471V656.8H472V656.7H473V654.7H474V654.3H475V653.8H476V653.4H477V654.5H478V654.0H479V653.3H480V654.7H481V654.7H482V654.0H483V654.4H484V653.8H485V654.1H486V654.3H487V654.2H488V653.7H489V653.2H490V654.6H491V654.2H492V654.9H493V653.1H494V653.2H495V653.6H496V677.3H497V698.3H498V697.0H499V691.6H500V689.6H501V689.2H502V691.1H503V676.8H504V676.7H505V691.5H506V691.4H507V683.9H508V688.9H509V690.7H510V692.0H511V671.5H512V675.7H513V689.2H514V674.5H515V674.3H516V686.5H517V686.3H518V683.9H519V670.9H520V678.6H521V660.8H522V660.3H523V679.3H524V678.1H525V672.8H526V671.7H527V656.9H528V656.4H529V679.9H530V678.1H531V665.8H532V669.4H533V667.6H534V659.0H535V660.4H536V659.7H537V666.1H538V665.4H539V664.3H540V663.6H541V659.4H542V654.9H543V654.2H544V654.6H545V654.2H546V652.6H547V657.6H548V661.1H549V654.4H550V652.1H551V652.1H552V656.0H553V652.1H554V652.0H555V652.0H556V654.2H557V652.8H558V652.0H559V652.0H560V652.0H561V654.7H562V652.0H563V652.0H564V655.1H565V655.1H566V656.4H567V653.4H568V655.4H569V655.4H570V652.0H571V652.0H572V652.0H573V652.0H574V652.0H575V652.9H576V652.9H577V652.0H578V653.1H579V652.0H580V653.3H581V653.0H582V660.5H583V659.5H584V652.0H585V652.0H586V657.4H587V652.2H588V652.0H589V658.2H590V658.2H591V654.2H592V654.2H593V652.0H594V652.0H595V652.0H596V652.0H597V652.0H598V652.0H599V656.4H600V652.0H601V658.7H602V656.1H603V656.1H604V652.2H605V653.6H606V652.0H607V652.0H608V652.0H609V654.1H610V658.6H611V652.0H612V656.4H613V652.1H614V660.0H615V660.0H616V654.3H617V652.0H618V652.0H619V652.0H620V657.3H621V663.3H622V667.1H623V784.0H623V784.0H622V787.7H621V788.6H620V801.0H619V801.0H618V801.0H617V801.0H616V795.9H615V794.9H614V794.9H613V799.4H612V798.3H611V798.3H610V801.0H609V801.0H608V794.0H607V794.0H606V791.2H605V791.2H604V798.8H603V798.8H602V795.4H601V789.7H600V789.7H599V799.1H598V799.1H597V792.6H596V792.6H595V801.0H594V794.7H593V793.9H592V793.9H591V792.8H590V792.8H589V795.7H588V795.5H587V801.0H586V801.0H585V801.0H584V790.1H583V797.9H582V801.0H581V798.2H580V793.1H579V795.0H578V789.7H577V795.8H576V798.2H575V798.2H574V801.0H573V799.0H572V796.8H571V799.5H570V799.5H569V795.7H568V795.1H567V795.1H566V801.0H565V801.0H564V796.0H563V790.6H562V797.8H561V798.5H560V798.4H559V795.0H558V794.7H557V801.0H556V795.0H555V793.3H554V795.1H553V794.8H552V795.6H551V795.3H550V795.6H549V795.4H548V794.1H547V793.3H546V790.8H545V790.3H544V789.1H543V789.7H542V789.0H541V786.7H540V786.0H539V784.6H538V783.9H537V787.2H536V786.5H535V784.2H534V782.1H533V778.6H532V777.0H531V774.2H530V771.8H529V775.7H528V774.4H527V782.1H526V774.1H525V772.8H524V765.1H523V762.7H522V765.6H521V772.0H520V770.9H519V767.6H518V761.6H517V766.2H516V766.0H515V767.4H514V742.5H513V742.4H512V772.8H511V762.1H510V774.4H509V751.2H508V757.1H507V756.9H506V775.1H505V774.9H504V759.9H503V752.9H502V754.6H501V754.5H500V749.4H499V749.0H498V749.2H497V774.1H496V798.3H495V798.3H494V799.2H493V798.8H492V799.6H491V799.5H490V800.0H489V798.0H488V799.5H487V798.1H486V798.1H485V798.6H484V798.6H483V799.4H482V800.0H481V798.3H480V798.9H479V799.3H478V798.1H477V798.1H476V799.3H475V799.0H474V797.7H473V796.6H472V796.5H471V800.0H470V793.2H469Z M469 829.8H469V829.8H470V825.2H471V822.3H472V819.1H473V816.3H474V814.8H475V814.8H476V814.3H477V817.9H478V817.9H479V814.9H480V817.9H481V817.9H482V814.6H483V811.5H484V814.3H485V814.8H486V814.8H487V816.7H488V812.6H489V812.7H490V812.7H491V811.3H492V811.3H493V814.1H494V812.1H495V812.1H496V838.7H497V853.7H498V861.6H499V862.2H500V856.6H501V860.7H502V860.6H503V853.9H504V846.5H505V852.1H506V854.8H507V861.0H508V860.8H509V852.5H510V850.5H511V850.3H512V850.7H513V850.5H514V858.6H515V857.4H516V837.5H517V851.4H518V850.5H519V856.8H520V848.8H521V850.0H522V848.3H523V839.9H524V825.8H525V839.4H526V837.8H527V826.9H528V846.6H529V844.5H530V842.8H531V826.2H532V827.5H533V831.8H534V826.5H535V825.6H536V821.5H537V825.0H538V824.4H539V821.4H540V816.7H541V816.1H542V822.3H543V811.6H544V811.0H545V818.9H546V819.7H547V819.5H548V818.2H549V809.0H550V809.0H551V818.6H552V818.3H553V819.1H554V818.8H555V819.9H556V819.6H557V818.7H558V820.3H559V819.6H560V814.3H561V819.4H562V819.4H563V818.7H564V815.2H565V816.6H566V818.1H567V818.1H568V814.5H569V816.7H570V818.0H571V818.0H572V816.5H573V809.0H574V820.0H575V820.0H576V812.7H577V812.7H578V819.0H579V815.6H580V814.5H581V814.5H582V816.2H583V818.2H584V818.2H585V814.7H586V814.7H587V821.3H588V818.4H589V822.0H590V822.0H591V816.6H592V816.6H593V809.0H594V809.0H595V815.8H596V816.2H597V816.2H598V813.1H599V813.1H600V818.7H601V818.8H602V821.6H603V821.6H604V814.0H605V809.0H606V809.0H607V822.0H608V809.5H609V809.5H610V818.7H611V814.9H612V812.5H613V813.2H614V815.8H615V815.8H616V816.0H617V811.4H618V819.4H619V817.8H620V818.4H621V822.6H622V826.6H623V942.4H623V942.4H622V945.2H621V948.0H620V958.0H619V948.0H618V948.0H617V950.0H616V944.3H615V958.0H614V951.9H613V951.9H612V955.7H611V948.8H610V948.8H609V951.9H608V951.9H607V950.8H606V947.6H605V947.6H604V950.9H603V950.9H602V952.4H601V952.4H600V951.9H599V951.9H598V943.0H597V944.8H596V948.3H595V948.3H594V942.9H593V942.9H592V957.1H591V949.5H590V951.3H589V956.9H588V956.9H587V949.9H586V958.0H585V947.2H584V947.2H583V945.3H582V945.3H581V954.5H580V950.2H579V950.2H578V949.1H577V951.9H576V949.4H575V949.4H574V950.1H573V950.1H572V950.3H571V947.6H570V955.5H569V948.5H568V948.5H567V950.4H566V958.0H565V958.0H564V956.9H563V944.8H562V944.8H561V957.4H560V957.1H559V948.6H558V947.9H557V948.1H556V944.7H555V944.0H554V943.2H553V939.3H552V943.0H551V942.4H550V938.3H549V937.6H548V943.9H547V944.1H546V945.0H545V942.7H544V942.5H543V938.1H542V937.9H541V938.9H540V934.6H539V941.0H538V940.8H537V947.2H536V947.0H535V939.0H534V938.1H533V927.5H532V947.6H531V929.5H530V931.8H529V944.0H528V943.1H527V916.6H526V914.8H525V942.6H524V929.9H523V918.0H522V916.4H521V933.0H520V922.9H519V901.8H518V900.8H517V933.6H516V933.5H515V917.3H514V923.4H513V923.2H512V905.1H511V904.9H510V928.3H509V897.4H508V915.6H507V915.5H506V912.0H505V925.3H504V917.9H503V917.7H502V921.2H501V917.0H500V907.5H499V906.8H498V905.8H497V933.1H496V955.0H495V955.2H494V955.0H493V955.8H492V956.9H491V955.4H490V956.3H489V957.0H488V955.6H487V955.9H486V955.5H485V956.6H484V956.5H483V955.8H482V955.7H481V956.3H480V955.4H479V955.5H478V955.8H477V956.9H476V956.8H475V956.5H474V953.5H473V952.0H472V948.7H471V942.5H470V940.3H469Z M627 669.4H627V669.4H628V674.5H629V667.4H630V666.3H631V653.4H632V652.5H633V668.6H634V666.9H635V666.9H636V664.6H637V660.8H638V665.1H639V657.0H640V661.2H641V661.2H642V660.2H643V652.0H644V652.0H645V659.9H646V655.7H647V655.7H648V666.3H649V656.7H650V656.7H651V653.9H652V660.2H653V663.9H654V664.2H655V679.8H656V656.1H657V685.6H658V685.6H659V685.5H660V685.5H661V690.4H662V685.8H663V683.4H664V683.4H665V683.8H666V670.0H667V663.9H668V667.3H669V667.3H670V658.4H671V657.8H672V662.0H673V662.0H674V661.5H675V662.8H676V660.1H677V662.9H678V652.0H679V664.4H680V662.8H681V664.2H682V670.8H683V670.8H684V670.8H685V684.9H686V684.9H687V671.7H688V671.7H689V672.1H690V668.8H691V665.4H692V664.1H693V659.8H694V658.4H695V658.5H696V656.9H697V658.6H698V652.0H699V659.6H700V659.6H701V662.5H702V652.1H703V659.7H704V656.3H705V656.3H706V663.8H707V663.8H708V658.7H709V658.7H710V658.9H711V658.9H712V655.7H713V654.3H714V654.3H715V659.9H716V659.9H717V664.7H718V659.5H719V669.0H720V675.8H721V687.4H722V689.5H723V700.4H724V701.5H725V708.5H726V753.2H726V753.2H725V753.7H724V759.1H723V756.7H722V775.1H721V780.6H720V777.2H719V782.5H718V782.6H717V782.5H716V780.6H715V793.9H714V776.4H713V776.3H712V782.8H711V782.7H710V781.1H709V779.7H708V783.0H707V782.3H706V775.7H705V784.7H704V780.7H703V780.7H702V780.9H701V783.1H700V783.0H699V781.4H698V793.2H697V793.1H696V774.4H695V778.3H694V778.3H693V793.2H692V778.0H691V777.7H690V774.5H689V774.2H688V786.2H687V768.6H686V774.7H685V778.6H684V778.3H683V777.5H682V775.7H681V784.7H680V775.5H679V772.3H678V772.3H677V767.3H676V767.3H675V773.3H674V773.3H673V764.5H672V772.5H671V772.5H670V770.8H669V777.3H668V775.4H667V769.6H666V761.2H665V768.0H664V769.0H663V768.8H662V763.4H661V790.8H660V776.9H659V789.5H658V765.7H657V772.7H656V768.6H655V774.9H654V771.4H653V770.7H652V783.8H651V783.8H650V781.1H649V781.1H648V771.5H647V759.2H646V770.7H645V771.1H644V773.4H643V772.1H642V773.0H641V771.4H640V775.0H639V789.8H638V790.6H637V774.1H636V774.8H635V793.0H634V793.8H633V784.5H632V784.8H631V780.1H630V780.2H629V785.4H628V782.7H627Z M627 833.3H627V833.3H628V840.3H629V822.0H630V820.6H631V824.0H632V823.3H633V830.1H634V830.2H635V814.7H636V814.9H637V827.1H638V827.3H639V828.5H640V818.7H641V818.9H642V834.8H643V832.4H644V832.4H645V832.7H646V829.2H647V841.4H648V841.9H649V816.1H650V835.5H651V818.1H652V818.6H653V843.0H654V843.5H655V832.4H656V832.1H657V831.9H658V819.6H659V839.5H660V829.8H661V841.7H662V812.6H663V812.6H664V831.4H665V834.6H666V818.4H667V827.9H668V827.9H669V829.3H670V829.3H671V826.9H672V833.4H673V833.4H674V820.9H675V820.9H676V831.7H677V831.7H678V828.2H679V830.1H680V830.1H681V815.3H682V813.2H683V817.9H684V825.5H685V834.7H686V834.5H687V824.5H688V826.1H689V811.9H690V827.1H691V826.5H692V824.9H693V826.5H694V816.7H695V816.5H696V821.3H697V821.1H698V820.0H699V811.1H700V820.0H701V815.9H702V815.7H703V824.3H704V824.1H705V830.3H706V815.4H707V822.9H708V824.1H709V809.5H710V822.0H711V823.0H712V809.1H713V809.0H714V817.3H715V817.1H716V821.4H717V821.2H718V821.6H719V821.1H720V838.6H721V844.8H722V845.4H723V851.3H724V860.9H725V867.1H726V910.5H726V910.5H725V916.7H724V908.0H723V920.2H722V926.9H721V926.5H720V935.8H719V940.8H718V945.9H717V950.6H716V943.4H715V952.7H714V945.7H713V945.6H712V953.5H711V945.3H710V945.2H709V949.6H708V949.5H707V946.1H706V945.9H705V943.3H704V943.2H703V942.9H702V942.8H701V951.6H700V936.8H699V936.7H698V946.4H697V946.3H696V946.1H695V944.5H694V944.4H693V946.2H692V941.0H691V940.3H690V938.7H689V938.0H688V949.2H687V940.9H686V941.3H685V940.6H684V933.2H683V932.5H682V924.3H681V924.1H680V934.2H679V943.7H678V943.5H677V934.5H676V930.0H675V929.7H674V933.5H673V930.2H672V933.4H671V940.1H670V939.9H669V931.6H668V928.8H667V927.0H666V929.2H665V929.2H664V928.9H663V944.2H662V944.2H661V927.7H660V917.7H659V917.7H658V921.3H657V923.7H656V935.9H655V934.4H654V934.8H653V943.8H652V944.0H651V925.7H650V933.0H649V933.2H648V920.3H647V920.5H646V927.1H645V931.4H644V932.0H643V920.3H642V934.4H641V928.2H640V936.8H639V937.4H638V944.1H637V944.7H636V933.4H635V934.0H634V933.1H633V933.7H632V947.8H631V951.4H630V945.5H629V938.1H628V933.2H627Z M730 699.9H730V699.9H731V684.5H732V684.3H733V700.2H734V700.0H735V701.7H736V703.0H737V684.4H738V697.2H739V688.0H740V687.8H741V706.2H742V698.4H743V698.2H744V684.0H745V687.9H746V687.5H747V684.1H748V694.0H749V702.5H750V702.1H751V698.4H752V694.6H753V694.2H754V696.5H755V696.2H756V697.9H757V697.6H758V695.9H759V695.6H760V692.0H761V691.7H762V683.7H763V683.3H764V690.5H765V684.0H766V697.1H767V675.1H768V674.8H769V690.8H770V689.8H771V688.0H772V675.5H773V682.6H774V680.9H775V680.0H776V684.0H777V674.8H778V673.1H779V675.6H780V674.3H781V670.5H782V670.0H783V666.0H784V665.2H785V676.5H786V675.3H787V665.3H788V664.4H789V661.1H790V658.2H791V652.0H792V667.6H793V654.6H794V653.9H795V652.8H796V652.1H797V652.0H798V656.9H799V654.8H800V653.3H801V653.9H802V654.0H803V654.1H804V655.3H805V654.2H806V666.4H807V654.3H808V654.9H809V655.9H810V678.1H811V688.1H812V687.1H813V687.1H814V686.6H815V686.6H816V686.0H817V666.5H818V666.5H819V695.4H820V678.2H821V694.1H822V685.9H823V676.3H824V676.4H825V676.8H826V679.3H827V654.6H828V654.7H829V664.3H830V690.6H831V655.1H832V671.9H833V672.0H834V680.2H835V680.2H836V678.5H837V678.5H838V677.1H839V677.1H840V673.5H841V669.9H842V669.9H843V680.7H844V672.3H845V676.7H846V671.9H847V675.3H848V675.3H849V677.3H850V687.8H851V687.8H852V653.3H853V653.3H854V694.4H855V694.4H856V653.6H857V653.6H858V677.3H859V677.3H860V686.0H861V686.0H862V676.6H863V687.3H864V693.8H865V674.7H866V659.1H867V659.1H868V682.5H869V680.5H870V680.1H871V671.5H872V685.8H873V685.1H874V680.0H875V672.2H876V678.4H877V677.7H878V667.7H879V667.0H880V670.1H881V675.0H882V675.4H883V676.4H884V676.7H885V687.6H886V675.1H887V687.7H888V669.3H889V676.6H890V677.0H891V673.9H892V662.4H893V680.4H894V681.8H895V682.2H896V665.2H897V665.6H898V673.6H899V674.0H900V671.5H901V666.5H902V668.9H903V679.2H904V679.2H905V665.8H906V657.8H907V652.0H908V664.3H909V664.3H910V668.6H911V668.6H912V678.8H913V678.8H914V679.6H915V667.7H916V658.0H917V658.0H918V652.0H919V677.0H920V669.7H921V677.5H922V778.9H922V778.9H921V789.6H920V789.5H919V789.5H918V791.2H917V789.2H916V788.2H915V788.2H914V778.1H913V784.8H912V790.6H911V790.6H910V795.6H909V795.6H908V795.8H907V793.1H906V793.1H905V781.7H904V788.4H903V801.0H902V801.0H901V782.9H900V790.3H899V780.3H898V780.3H897V786.1H896V787.9H895V798.9H894V798.9H893V778.0H892V778.0H891V783.2H890V783.2H889V763.3H888V763.3H887V783.6H886V784.4H885V789.0H884V783.3H883V777.5H882V781.3H881V778.0H880V781.7H879V781.9H878V777.4H877V791.1H876V783.7H875V780.5H874V780.7H873V787.8H872V788.0H871V790.3H870V790.4H869V770.7H868V782.5H867V782.5H866V798.9H865V798.9H864V785.6H863V785.6H862V799.1H861V782.2H860V782.2H859V801.0H858V801.0H857V771.6H856V771.6H855V775.9H854V775.9H853V784.8H852V801.0H851V792.4H850V787.9H849V801.0H848V767.7H847V767.7H846V777.0H845V782.7H844V782.7H843V788.7H842V771.9H841V786.4H840V801.0H839V801.0H838V784.0H837V784.0H836V779.7H835V801.0H834V801.0H833V769.6H832V769.4H831V781.4H830V781.2H829V776.4H828V778.8H827V782.9H826V782.7H825V796.4H824V788.4H823V801.0H822V800.8H821V771.5H820V771.5H819V775.3H818V775.3H817V793.4H816V793.4H815V798.8H814V763.9H813V770.2H812V770.2H811V787.0H810V796.7H809V790.4H808V794.3H807V794.3H806V796.2H805V800.5H804V800.5H803V797.2H802V790.1H801V798.9H800V794.9H799V795.6H798V795.2H797V793.5H796V791.1H795V794.0H794V793.6H793V790.8H792V788.6H791V794.7H790V794.4H789V790.9H788V789.6H787V791.8H786V789.4H785V789.0H784V781.9H783V781.3H782V785.8H781V784.0H780V783.0H779V774.0H778V787.7H777V771.8H776V770.3H775V772.7H774V771.2H773V774.9H772V776.2H771V775.1H770V774.2H769V761.1H768V773.4H767V766.3H766V767.0H765V766.6H764V765.2H763V768.0H762V770.2H761V769.9H760V775.6H759V771.4H758V780.0H757V779.7H756V759.9H755V759.6H754V778.2H753V777.9H752V764.6H751V764.3H750V766.8H749V766.5H748V761.8H747V772.9H746V764.8H745V772.8H744V772.5H743V771.5H742V763.5H741V758.5H740V761.8H739V761.5H738V755.4H737V755.1H736V774.5H735V774.3H734V759.7H733V766.5H732V759.7H731V757.5H730Z M730 855.0H730V855.0H731V854.6H732V857.3H733V856.9H734V839.3H735V854.8H736V854.4H737V852.2H738V852.6H739V852.2H740V852.4H741V849.3H742V847.6H743V837.2H744V836.8H745V843.9H746V843.5H747V846.0H748V845.6H749V856.1H750V850.6H751V837.2H752V836.8H753V841.5H754V843.3H755V842.9H756V848.7H757V848.3H758V838.7H759V845.1H760V844.7H761V845.8H762V845.4H763V828.0H764V827.6H765V835.8H766V835.4H767V842.0H768V845.4H769V845.0H770V829.0H771V827.6H772V834.0H773V832.8H774V842.7H775V828.4H776V832.5H777V842.3H778V825.3H779V821.3H780V829.3H781V817.0H782V816.8H783V818.7H784V818.4H785V829.1H786V826.6H787V826.1H788V821.8H789V821.4H790V815.1H791V823.7H792V812.3H793V812.2H794V819.6H795V819.2H796V820.8H797V813.3H798V819.3H799V818.4H800V819.6H801V818.2H802V818.2H803V818.8H804V818.8H805V812.8H806V815.3H807V819.4H808V819.4H809V820.1H810V815.9H811V818.3H812V838.3H813V838.3H814V839.7H815V844.3H816V844.3H817V836.5H818V833.5H819V839.4H820V834.0H821V834.0H822V840.0H823V844.8H824V844.8H825V837.1H826V833.4H827V851.3H828V848.0H829V841.8H830V841.0H831V841.0H832V839.3H833V826.7H834V841.2H835V836.1H836V836.1H837V839.0H838V839.0H839V827.8H840V838.7H841V842.3H842V853.6H843V833.6H844V833.6H845V826.5H846V826.5H847V841.8H848V841.8H849V841.9H850V841.9H851V840.9H852V840.9H853V819.6H854V839.7H855V839.7H856V838.5H857V841.0H858V841.6H859V831.0H860V831.6H861V831.9H862V831.0H863V831.0H864V842.9H865V835.4H866V835.4H867V842.0H868V842.0H869V841.1H870V840.9H871V832.4H872V829.3H873V845.7H874V852.3H875V839.0H876V831.1H877V830.8H878V812.0H879V811.7H880V825.7H881V825.7H882V849.2H883V849.2H884V832.9H885V825.8H886V817.3H887V828.1H888V833.0H889V834.0H890V834.0H891V830.8H892V840.8H893V834.5H894V834.5H895V847.2H896V836.3H897V836.3H898V812.0H899V812.0H900V820.3H901V830.1H902V822.3H903V822.3H904V831.8H905V830.7H906V824.9H907V833.1H908V833.0H909V830.9H910V825.6H911V809.0H912V809.0H913V810.9H914V831.2H915V831.2H916V830.7H917V831.1H918V831.3H919V831.3H920V832.9H921V838.1H922V929.8H922V929.8H921V934.5H920V927.3H919V927.3H918V955.3H917V938.3H916V937.5H915V937.5H914V938.8H913V951.5H912V951.5H911V954.1H910V954.1H909V939.4H908V948.6H907V940.3H906V939.0H905V951.1H904V951.1H903V935.8H902V940.3H901V936.5H900V948.1H899V925.0H898V925.0H897V933.6H896V933.6H895V928.5H894V931.6H893V931.6H892V931.8H891V930.8H890V915.0H889V915.0H888V930.9H887V924.7H886V927.4H885V916.0H884V929.7H883V919.2H882V931.5H881V931.5H880V934.0H879V943.9H878V928.7H877V920.7H876V946.4H875V938.4H874V938.2H873V939.9H872V930.5H871V930.3H870V943.7H869V926.6H868V948.7H867V926.8H866V926.8H865V921.3H864V932.4H863V925.0H862V938.3H861V943.8H860V928.3H859V926.6H858V926.6H857V920.7H856V920.7H855V932.3H854V929.5H853V912.4H852V912.4H851V939.6H850V939.6H849V932.6H848V922.2H847V922.2H846V924.1H845V949.9H844V913.3H843V913.3H842V918.7H841V914.0H840V937.4H839V918.1H838V918.1H837V913.2H836V913.2H835V933.2H834V940.2H833V915.3H832V915.3H831V924.5H830V929.6H829V929.6H828V918.3H827V945.2H826V935.7H825V935.7H824V922.4H823V922.7H822V926.5H821V936.6H820V930.7H819V928.0H818V943.4H817V943.4H816V925.3H815V954.3H814V929.5H813V929.5H812V927.2H811V937.2H810V949.7H809V946.3H808V947.2H807V947.2H806V949.2H805V948.2H804V946.4H803V946.4H802V955.3H801V955.3H800V946.6H799V949.8H798V952.6H797V940.0H796V939.3H795V946.3H794V954.9H793V954.9H792V945.3H791V944.9H790V943.6H789V953.1H788V942.5H787V935.1H786V934.5H785V950.2H784V944.8H783V942.3H782V941.9H781V953.8H780V941.7H779V937.4H778V938.1H777V937.1H776V941.5H775V940.5H774V937.5H773V930.6H772V929.6H771V925.1H770V930.9H769V930.5H768V926.2H767V925.8H766V918.4H765V923.3H764V927.9H763V915.5H762V924.4H761V923.8H760V923.4H759V928.7H758V920.9H757V920.5H756V928.2H755V912.2H754V921.0H753V920.6H752V915.2H751V914.8H750V919.3H749V925.4H748V936.7H747V936.3H746V917.0H745V925.2H744V919.9H743V919.5H742V924.0H741V920.4H740V911.5H739V911.1H738V919.2H737V918.8H736V929.4H735V929.0H734V913.3H733V924.8H732V924.4H731V913.0H730Z M925 677.1H925V677.1H926V673.2H927V668.1H928V664.3H929V679.4H930V665.1H931V658.6H932V652.0H933V666.4H934V653.7H935V658.8H936V652.0H937V652.0H938V664.8H939V664.8H940V660.8H941V660.8H942V652.0H943V663.5H944V663.5H945V652.0H946V652.0H947V652.0H948V652.0H949V661.7H950V668.7H951V659.9H952V659.9H953V658.4H954V658.4H955V655.9H956V655.9H957V652.1H958V665.6H959V665.6H960V661.9H961V667.7H962V667.7H963V664.6H964V664.6H965V663.9H966V663.9H967V664.0H968V664.0H969V661.5H970V665.0H971V663.2H972V663.2H973V652.0H974V652.3H975V652.0H976V685.6H977V658.9H978V658.9H979V659.4H980V659.4H981V676.3H982V676.3H983V675.4H984V654.7H985V662.9H986V662.9H987V673.7H988V683.7H989V663.4H990V686.1H991V686.1H992V668.4H993V668.4H994V669.1H995V680.7H996V680.7H997V665.7H998V660.2H999V660.2H1000V675.0H1001V669.1H1002V670.7H1003V675.7H1004V652.5H1005V652.0H1006V653.8H1007V653.1H1008V652.6H1009V652.7H1010V652.2H1011V653.5H1012V653.0H1013V653.5H1014V652.4H1015V660.9H1016V652.6H1017V652.7H1018V652.2H1019V652.1H1020V652.5H1021V652.9H1022V652.2H1023V653.4H1024V654.8H1025V653.9H1026V652.3H1027V652.8H1028V653.9H1029V653.4H1030V652.6H1031V653.1H1032V652.1H1033V653.6H1034V654.0H1035V653.6H1036V652.2H1037V653.0H1038V652.9H1039V653.3H1040V653.6H1041V652.2H1042V652.8H1043V655.9H1044V668.4H1045V667.5H1046V680.2H1047V769.9H1047V769.9H1046V776.6H1045V787.5H1044V793.7H1043V793.1H1042V795.6H1041V796.4H1040V796.0H1039V795.7H1038V797.0H1037V795.2H1036V796.4H1035V796.5H1034V796.8H1033V795.9H1032V796.0H1031V796.3H1030V795.6H1029V796.3H1028V796.8H1027V796.1H1026V795.1H1025V787.2H1024V796.8H1023V795.1H1022V796.5H1021V795.2H1020V795.1H1019V796.1H1018V793.1H1017V796.5H1016V796.3H1015V796.9H1014V796.9H1013V795.4H1012V795.3H1011V796.7H1010V796.6H1009V795.6H1008V796.5H1007V795.2H1006V797.4H1005V784.4H1004V784.4H1003V778.4H1002V779.0H1001V778.2H1000V778.2H999V797.7H998V785.5H997V781.9H996V781.9H995V772.3H994V797.1H993V800.7H992V783.6H991V776.7H990V791.8H989V791.8H988V776.3H987V784.5H986V784.5H985V779.7H984V782.9H983V778.2H982V797.2H981V785.0H980V776.6H979V793.3H978V782.6H977V782.6H976V801.0H975V801.0H974V790.3H973V797.9H972V799.7H971V784.8H970V786.1H969V788.2H968V788.2H967V791.9H966V776.4H965V792.1H964V788.4H963V788.4H962V801.0H961V785.7H960V780.4H959V784.5H958V784.4H957V791.2H956V791.1H955V777.0H954V790.8H953V785.6H952V785.6H951V782.1H950V783.6H949V783.6H948V781.6H947V781.5H946V796.6H945V796.6H944V790.7H943V784.6H942V789.2H941V789.1H940V783.9H939V801.0H938V801.0H937V788.6H936V788.5H935V785.6H934V785.5H933V789.2H932V787.9H931V780.6H930V778.5H929V781.5H928V767.8H927V767.0H926V765.4H925Z M925 839.8H925V839.8H926V841.6H927V839.3H928V829.5H929V826.7H930V823.1H931V820.2H932V826.1H933V826.1H934V830.3H935V830.3H936V817.9H937V816.5H938V816.5H939V821.0H940V816.9H941V822.0H942V822.0H943V821.7H944V819.7H945V819.7H946V819.6H947V812.3H948V812.3H949V823.3H950V823.3H951V819.7H952V817.2H953V817.2H954V821.4H955V821.4H956V809.0H957V812.8H958V812.8H959V810.8H960V810.8H961V821.2H962V825.2H963V825.2H964V820.4H965V828.0H966V826.7H967V816.9H968V816.7H969V818.6H970V822.8H971V816.2H972V819.8H973V815.6H974V830.3H975V825.0H976V824.9H977V828.7H978V829.0H979V819.9H980V815.0H981V815.0H982V830.1H983V830.1H984V826.5H985V826.5H986V826.6H987V830.7H988V830.7H989V811.9H990V811.9H991V815.2H992V815.2H993V831.1H994V822.7H995V822.7H996V814.9H997V826.5H998V826.5H999V822.6H1000V809.8H1001V828.6H1002V828.2H1003V826.4H1004V826.4H1005V820.8H1006V814.5H1007V813.0H1008V813.1H1009V813.2H1010V814.5H1011V814.5H1012V814.2H1013V813.1H1014V813.5H1015V813.3H1016V813.0H1017V813.6H1018V813.3H1019V813.7H1020V815.0H1021V815.0H1022V815.0H1023V814.0H1024V814.5H1025V813.5H1026V813.8H1027V814.9H1028V813.3H1029V813.9H1030V813.7H1031V813.2H1032V813.3H1033V814.6H1034V814.0H1035V814.8H1036V814.9H1037V813.5H1038V813.7H1039V813.6H1040V813.1H1041V814.3H1042V814.7H1043V817.8H1044V817.3H1045V829.3H1046V835.3H1047V929.2H1047V929.2H1046V938.2H1045V944.1H1044V947.9H1043V955.1H1042V955.1H1041V955.1H1040V950.9H1039V950.9H1038V954.6H1037V954.6H1036V951.4H1035V951.4H1034V953.0H1033V953.0H1032V951.0H1031V952.5H1030V957.7H1029V950.5H1028V951.0H1027V955.1H1026V950.6H1025V950.6H1024V948.4H1023V948.4H1022V957.4H1021V950.6H1020V952.8H1019V952.8H1018V951.1H1017V951.1H1016V951.7H1015V951.7H1014V953.0H1013V953.0H1012V952.3H1011V950.6H1010V950.6H1009V951.3H1008V951.3H1007V952.6H1006V951.4H1005V948.3H1004V932.9H1003V941.7H1002V944.2H1001V957.9H1000V938.3H999V935.6H998V935.6H997V942.5H996V958.0H995V958.0H994V945.3H993V941.2H992V941.2H991V925.7H990V925.7H989V936.9H988V942.0H987V937.9H986V936.3H985V936.3H984V957.4H983V932.4H982V940.4H981V940.4H980V941.6H979V932.9H978V938.0H977V939.4H976V940.4H975V950.3H974V950.6H973V958.0H972V954.5H971V956.3H970V956.3H969V952.8H968V958.0H967V958.0H966V935.9H965V952.8H964V947.6H963V947.6H962V945.8H961V944.8H960V944.8H959V945.7H958V945.7H957V948.2H956V942.1H955V942.1H954V942.1H953V942.1H952V936.4H951V936.4H950V950.1H949V950.1H948V945.2H947V946.1H946V946.1H945V957.7H944V957.7H943V942.7H942V942.7H941V954.7H940V940.7H939V940.7H938V933.6H937V933.6H936V942.7H935V945.2H934V945.2H933V933.6H932V937.8H931V943.8H930V941.3H929V948.4H928V936.6H927V934.1H926V929.7H925Z M1050 653.8H1050V653.8H1051V654.4H1052V653.8H1053V654.8H1054V654.1H1055V654.7H1056V654.5H1057V654.9H1058V654.3H1059V655.0H1060V653.3H1061V653.6H1062V654.6H1063V654.4H1064V658.9H1065V654.9H1066V653.5H1067V653.3H1068V653.7H1069V653.1H1070V654.3H1071V653.2H1072V653.4H1073V654.7H1074V653.2H1075V653.8H1076V654.6H1077V654.1H1078V654.1H1079V655.0H1080V653.7H1081V654.4H1082V659.1H1083V677.5H1084V677.5H1085V688.3H1086V670.0H1087V669.6H1088V669.6H1089V671.8H1090V673.0H1091V663.5H1092V663.5H1093V684.3H1094V684.3H1095V671.7H1096V671.7H1097V660.5H1098V677.9H1099V668.3H1100V668.3H1101V687.3H1102V678.5H1103V673.2H1104V669.5H1105V661.3H1106V654.7H1107V654.8H1108V655.9H1109V654.9H1110V654.9H1111V653.4H1112V653.5H1113V654.2H1114V653.2H1115V653.9H1116V653.9H1117V653.8H1118V654.8H1119V655.0H1120V654.8H1121V654.0H1122V653.9H1123V654.1H1124V653.3H1125V653.5H1126V654.7H1127V654.2H1128V654.3H1129V678.5H1130V699.1H1131V701.0H1132V703.4H1133V703.4H1134V704.5H1135V702.7H1136V706.0H1137V681.7H1138V671.1H1139V681.9H1140V695.2H1141V695.3H1142V695.3H1143V697.8H1144V702.2H1145V695.6H1146V695.6H1147V695.7H1148V695.7H1149V676.1H1150V654.7H1151V653.1H1152V654.7H1153V654.8H1154V654.3H1155V654.6H1156V654.0H1157V653.6H1158V657.7H1159V653.4H1160V654.4H1161V653.1H1162V653.1H1163V653.9H1164V653.0H1165V653.9H1166V654.4H1167V653.8H1168V655.0H1169V653.5H1170V654.0H1171V653.5H1172V653.9H1173V653.4H1174V653.6H1175V654.1H1176V653.4H1177V653.9H1178V654.2H1179V665.0H1180V653.9H1181V654.5H1182V653.5H1183V654.6H1184V661.2H1185V691.2H1186V684.4H1187V685.4H1188V685.8H1189V686.8H1190V691.5H1191V700.9H1192V701.9H1193V692.9H1194V706.7H1195V694.6H1196V700.1H1197V704.2H1198V712.9H1199V718.7H1200V717.7H1201V712.6H1202V733.2H1202V733.2H1201V738.1H1200V742.2H1199V732.9H1198V734.6H1197V754.3H1196V753.9H1195V759.1H1194V752.7H1193V753.7H1192V762.7H1191V763.7H1190V777.5H1189V778.5H1188V768.2H1187V758.6H1186V764.8H1185V781.6H1184V797.9H1183V797.5H1182V798.6H1181V797.6H1180V797.4H1179V798.5H1178V798.3H1177V797.9H1176V797.2H1175V798.0H1174V798.7H1173V797.4H1172V797.5H1171V798.4H1170V793.9H1169V797.7H1168V798.8H1167V797.7H1166V797.7H1165V797.7H1164V797.8H1163V798.6H1162V798.3H1161V797.7H1160V789.6H1159V798.0H1158V798.6H1157V798.2H1156V798.1H1155V798.1H1154V797.4H1153V798.3H1152V798.6H1151V798.6H1150V777.7H1149V756.4H1148V756.4H1147V762.7H1146V760.8H1145V760.4H1144V767.9H1143V760.0H1142V760.0H1141V759.7H1140V765.8H1139V784.8H1138V765.1H1137V745.4H1136V745.4H1135V744.4H1134V744.4H1133V748.3H1132V748.3H1131V750.4H1130V773.6H1129V798.4H1128V798.2H1127V798.7H1126V798.2H1125V797.4H1124V798.5H1123V797.4H1122V797.9H1121V798.5H1120V798.3H1119V797.2H1118V797.3H1117V797.3H1116V798.9H1115V798.6H1114V798.2H1113V798.7H1112V798.7H1111V797.0H1110V798.2H1109V798.2H1108V797.3H1107V798.7H1106V776.6H1105V757.5H1104V773.6H1103V772.3H1102V771.0H1101V771.0H1100V778.2H1099V778.2H1098V762.4H1097V762.4H1096V770.0H1095V787.1H1094V770.2H1093V772.0H1092V772.4H1091V772.4H1090V785.6H1089V772.6H1088V761.6H1087V771.5H1086V771.5H1085V770.0H1084V770.0H1083V782.7H1082V798.7H1081V798.4H1080V798.2H1079V798.1H1078V797.2H1077V798.4H1076V798.7H1075V792.5H1074V786.6H1073V798.6H1072V798.4H1071V797.3H1070V797.7H1069V798.5H1068V797.5H1067V798.4H1066V798.3H1065V798.9H1064V797.2H1063V798.6H1062V786.5H1061V797.2H1060V797.4H1059V798.9H1058V797.2H1057V797.6H1056V797.5H1055V798.0H1054V797.7H1053V797.1H1052V797.1H1051V797.2H1050Z M1050 811.3H1050V811.3H1051V811.0H1052V811.4H1053V812.6H1054V812.1H1055V811.2H1056V812.0H1057V812.2H1058V811.9H1059V812.3H1060V812.3H1061V812.0H1062V811.3H1063V812.2H1064V813.0H1065V812.1H1066V812.8H1067V811.7H1068V812.0H1069V811.2H1070V811.1H1071V811.8H1072V811.8H1073V812.7H1074V812.7H1075V811.2H1076V811.7H1077V811.6H1078V811.6H1079V812.0H1080V811.3H1081V812.8H1082V826.6H1083V841.7H1084V839.6H1085V824.7H1086V833.5H1087V843.0H1088V844.1H1089V840.2H1090V849.6H1091V838.1H1092V830.5H1093V830.5H1094V853.8H1095V853.8H1096V826.4H1097V849.5H1098V851.3H1099V827.8H1100V847.8H1101V847.8H1102V847.3H1103V841.2H1104V841.2H1105V831.4H1106V810.6H1107V810.2H1108V810.9H1109V819.3H1110V819.1H1111V810.7H1112V810.2H1113V811.1H1114V811.1H1115V811.1H1116V810.1H1117V810.9H1118V811.5H1119V811.6H1120V810.4H1121V811.2H1122V810.6H1123V811.0H1124V811.2H1125V810.3H1126V810.1H1127V810.3H1128V810.2H1129V831.7H1130V856.2H1131V859.1H1132V859.3H1133V860.9H1134V860.3H1135V860.2H1136V860.5H1137V844.7H1138V828.7H1139V840.2H1140V850.8H1141V850.3H1142V850.3H1143V846.6H1144V853.2H1145V853.2H1146V850.2H1147V849.9H1148V849.9H1149V832.9H1150V811.1H1151V811.6H1152V812.3H1153V812.3H1154V812.2H1155V812.1H1156V812.3H1157V811.4H1158V812.8H1159V812.7H1160V811.5H1161V811.5H1162V812.9H1163V812.6H1164V813.0H1165V812.4H1166V811.5H1167V811.8H1168V821.9H1169V811.4H1170V812.5H1171V811.4H1172V812.3H1173V812.7H1174V811.6H1175V812.6H1176V812.4H1177V812.4H1178V811.6H1179V812.6H1180V812.1H1181V811.6H1182V812.5H1183V811.7H1184V819.0H1185V848.5H1186V839.6H1187V847.2H1188V848.2H1189V852.0H1190V847.4H1191V855.0H1192V850.8H1193V857.3H1194V846.3H1195V852.9H1196V856.8H1197V860.2H1198V868.7H1199V871.9H1200V872.3H1201V876.1H1202V890.5H1202V890.5H1201V894.3H1200V897.0H1199V912.1H1198V917.7H1197V904.4H1196V927.6H1195V929.5H1194V917.0H1193V918.0H1192V916.2H1191V921.0H1190V920.4H1189V915.0H1188V916.0H1187V939.1H1186V943.6H1185V951.8H1184V956.0H1183V955.0H1182V955.6H1181V956.8H1180V949.9H1179V956.9H1178V955.9H1177V956.9H1176V956.9H1175V956.4H1174V955.1H1173V944.3H1172V955.0H1171V956.2H1170V955.6H1169V956.3H1168V956.4H1167V955.7H1166V956.6H1165V955.6H1164V955.2H1163V952.7H1162V955.3H1161V956.7H1160V956.9H1159V955.3H1158V956.0H1157V955.3H1156V955.9H1155V956.7H1154V955.0H1153V955.7H1152V955.1H1151V956.7H1150V940.2H1149V913.7H1148V910.7H1147V920.5H1146V914.5H1145V920.3H1144V919.7H1143V919.7H1142V913.3H1141V916.8H1140V924.1H1139V940.9H1138V922.5H1137V906.4H1136V906.4H1135V902.2H1134V902.2H1133V902.8H1132V902.8H1131V902.2H1130V931.7H1129V955.0H1128V956.7H1127V957.0H1126V956.9H1125V955.7H1124V956.0H1123V942.3H1122V956.7H1121V952.6H1120V955.1H1119V955.5H1118V955.7H1117V955.3H1116V955.9H1115V956.1H1114V955.5H1113V956.6H1112V946.3H1111V955.3H1110V956.4H1109V955.8H1108V955.4H1107V955.3H1106V948.2H1105V941.5H1104V941.5H1103V909.2H1102V909.2H1101V910.8H1100V935.0H1099V935.0H1098V926.3H1097V926.3H1096V941.4H1095V934.9H1094V923.4H1093V940.1H1092V940.1H1091V932.6H1090V932.6H1089V928.4H1088V923.4H1087V918.1H1086V918.1H1085V913.0H1084V923.1H1083V939.1H1082V954.3H1081V954.9H1080V954.5H1079V954.2H1078V954.5H1077V955.0H1076V955.2H1075V955.8H1074V955.6H1073V954.4H1072V954.5H1071V955.2H1070V954.2H1069V946.3H1068V954.1H1067V954.2H1066V955.8H1065V955.5H1064V955.8H1063V955.3H1062V956.0H1061V954.2H1060V955.2H1059V955.0H1058V955.9H1057V955.8H1056V956.0H1055V954.8H1054V955.5H1053V954.6H1052V955.1H1051V954.7H1050Z"/><rect x="626" y="640.5" width="2" height="305" fill="#c3404c"/><path d="M8 945 L20.5 957 L20.5 970 L8 970 Z" fill="#9b9b9b"/><text x="11.5" y="968" font-size="10" font-weight="bold" fill="#fff" font-family="Liberation Sans">1</text><path d="M114 945 L126.5 957 L126.5 970 L114 970 Z" fill="#9b9b9b"/><text x="117.5" y="968" font-size="10" font-weight="bold" fill="#fff" font-family="Liberation Sans">1</text><path d="M247 945 L259.5 957 L259.5 970 L247 970 Z" fill="#9b9b9b"/><text x="250.5" y="968" font-size="10" font-weight="bold" fill="#fff" font-family="Liberation Sans">1</text><path d="M333 945 L345.5 957 L345.5 970 L333 970 Z" fill="#9b9b9b"/><text x="336.5" y="968" font-size="10" font-weight="bold" fill="#fff" font-family="Liberation Sans">1</text><path d="M468 945 L480.5 957 L480.5 970 L468 970 Z" fill="#9b9b9b"/><text x="471.5" y="968" font-size="10" font-weight="bold" fill="#fff" font-family="Liberation Sans">1</text><path d="M626 945 L638.5 957 L638.5 970 L626 970 Z" fill="#9b9b9b"/><text x="629.5" y="968" font-size="10" font-weight="bold" fill="#fff" font-family="Liberation Sans">1</text><path d="M729 945 L741.5 957 L741.5 970 L729 970 Z" fill="#9b9b9b"/><text x="732.5" y="968" font-size="10" font-weight="bold" fill="#fff" font-family="Liberation Sans">1</text><path d="M924 945 L936.5 957 L936.5 970 L924 970 Z" fill="#9b9b9b"/><text x="927.5" y="968" font-size="10" font-weight="bold" fill="#fff" font-family="Liberation Sans">1</text><path d="M1049 945 L1061.5 957 L1061.5 970 L1049 970 Z" fill="#9b9b9b"/><text x="1052.5" y="968" font-size="10" font-weight="bold" fill="#fff" font-family="Liberation Sans">1</text></svg>
  <div class="a" style="left:20px;top:1007px;width:631px;height:9px;border-radius:4.5px;background:#fff"></div>
<div class="a" style="left:33.5px;top:1005.2px;width:12.6px;height:12.6px;border-radius:50%;background:radial-gradient(circle at 50% 40%,#4d87e0,#3a70cf)"></div>
<div class="a" style="left:673px;top:984px;width:155px;height:55px;border-radius:5px;background:#fff"></div>
<div class="a" style="left:673px;top:985px;width:155px;text-align:center;font-size:45px;color:#4a4a4a;letter-spacing:-1px;-webkit-text-stroke:0.4px #4a4a4a">00:06</div>
<div class="a" style="left:20px;top:1055px;font-size:17.2px;color:#4a4a4a;-webkit-text-stroke:0.25px #4a4a4a">Registered to Pieter Stenekes - Sonoris Audio Engineering</div>

  <div id="bd"></div>
</div>
</body></html>
